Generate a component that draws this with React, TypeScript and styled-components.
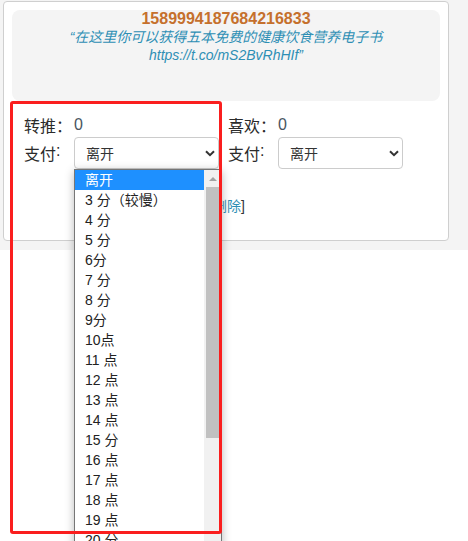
import React from "react";
import styled, { createGlobalStyle } from "styled-components";

const GlobalStyle = createGlobalStyle`
  html, body {
    margin: 0;
    padding: 0;
    overflow: hidden;
    background: #ffffff;
  }
  body {
    font-family: "Liberation Sans", "Noto Sans CJK SC", sans-serif;
    color: #333333;
  }
`;

const Stage = styled.div`
  position: relative;
  width: 468px;
  height: 541px;
  overflow: hidden;
`;

const Backdrop = styled.div`
  background: #f4f4f4;
  padding: 1px 19px 9px 3px;
`;

const Card = styled.div`
  box-sizing: border-box;
  height: 240px;
  background: #ffffff;
  border: 1px solid #cfcfcf;
  border-radius: 4px;
  padding: 8px;
`;

const TweetBox = styled.div`
  height: 91px;
  background: #f4f4f4;
  border-radius: 8px;
  text-align: center;
`;

const TweetId = styled.div`
  font-weight: bold;
  font-size: 16px;
  line-height: 18px;
  color: #c5702c;
`;

const TweetText = styled.div`
  font-style: italic;
  font-size: 14px;
  line-height: 18px;
  color: #2e8fb4;
`;

const Stats = styled.div`
  display: grid;
  grid-template-columns: 204px 204px;
  padding: 13px 0 0 12px;
`;

const Column = styled.div`
  display: flex;
  flex-direction: column;
  gap: 1px;
`;

const StatLine = styled.div`
  display: flex;
  align-items: center;
  height: 22px;
  font-size: 16px;
`;

const Label = styled.span`
  width: 50px;
  flex: none;
  font-size: 16px;
  color: #2b2b2b;
`;

const Value = styled.span`
  font-size: 16px;
  color: #4a5561;
`;

const PayLine = styled.div`
  display: flex;
  align-items: center;
  height: 32px;
`;

const RaisedColon = styled.span`
  position: relative;
  top: -4px;
`;

const SelectBox = styled.div<{ $width: number }>`
  position: relative;
  box-sizing: border-box;
  width: ${(p) => p.$width}px;
  height: 32px;
  display: flex;
  align-items: center;
  justify-content: space-between;
  padding: 0 3px 0 11px;
  border: 1px solid #cccccc;
  border-radius: 4px;
  background: #ffffff;
  font-size: 14px;
  color: #333333;
`;

const Chevron = () => (
  <svg width="10" height="7" viewBox="0 0 10 7">
    <path d="M1 1.2 L5 5.2 L9 1.2" fill="none" stroke="#333" strokeWidth="2" />
  </svg>
);

const Dropdown = styled.div`
  position: absolute;
  top: 31px;
  left: -1px;
  z-index: 2;
  box-sizing: border-box;
  width: 148px;
  height: 390px;
  display: flex;
  background: #ffffff;
  border: 1px solid #767676;
  box-shadow: 0 2px 9px rgba(0, 0, 0, 0.28);
`;

const OptionList = styled.div`
  flex: 1;
  display: flex;
  flex-direction: column;
`;

const Option = styled.div<{ $active?: boolean }>`
  height: 20px;
  line-height: 20px;
  padding-left: 10px;
  font-size: 14px;
  white-space: nowrap;
  color: ${(p) => (p.$active ? "#ffffff" : "#222222")};
  background: ${(p) => (p.$active ? "#1e90ff" : "transparent")};
`;

const Scrollbar = styled.div`
  width: 17px;
  flex: none;
  display: flex;
  flex-direction: column;
  background: #f1f1f1;
`;

const ArrowCell = styled.div`
  height: 17px;
  display: flex;
  align-items: center;
  justify-content: center;
`;

const UpArrow = styled.div`
  width: 0;
  height: 0;
  border-left: 4px solid transparent;
  border-right: 4px solid transparent;
  border-bottom: 4px solid #a3a3a3;
`;

const Thumb = styled.div`
  height: 251px;
  margin: 0 2px;
  background: #c1c1c1;
`;

const ActionRow = styled.div`
  margin-top: 27px;
  padding-left: 2px;
  text-align: center;
  font-size: 14px;
  line-height: 20px;
  color: #333333;
`;

const ActionLink = styled.a`
  color: #2e8fb4;
  text-decoration: none;
`;

const Highlight = styled.div`
  position: absolute;
  left: 10px;
  top: 101px;
  z-index: 3;
  box-sizing: border-box;
  width: 212px;
  height: 433px;
  border: 3px solid #fa1e1e;
  border-radius: 3px;
  pointer-events: none;
`;

const options = [
  "离开",
  "3 分（较慢）",
  "4 分",
  "5 分",
  "6分",
  "7 分",
  "8 分",
  "9分",
  "10点",
  "11 点",
  "12 点",
  "13 点",
  "14 点",
  "15 分",
  "16 点",
  "17 点",
  "18 点",
  "19 点",
  "20 分",
];

export default function App() {
  return (
    <Stage>
      <GlobalStyle />
      <Backdrop>
        <Card>
          <TweetBox>
            <TweetId>1589994187684216833</TweetId>
            <TweetText>
              “在这里你可以获得五本免费的健康饮食营养电子书
              <br />
              https://t.co/mS2BvRhHIf”
            </TweetText>
          </TweetBox>
          <Stats>
            <Column>
              <StatLine>
                <Label>转推：</Label>
                <Value>0</Value>
              </StatLine>
              <PayLine>
                <Label>
                  支付<RaisedColon>:</RaisedColon>
                </Label>
                <SelectBox $width={145}>
                  <span>离开</span>
                  <Chevron />
                  <Dropdown>
                    <OptionList>
                      {options.map((o, i) => (
                        <Option key={o} $active={i === 0}>
                          {o}
                        </Option>
                      ))}
                    </OptionList>
                    <Scrollbar>
                      <ArrowCell>
                        <UpArrow />
                      </ArrowCell>
                      <Thumb />
                    </Scrollbar>
                  </Dropdown>
                </SelectBox>
              </PayLine>
            </Column>
            <Column>
              <StatLine>
                <Label>喜欢：</Label>
                <Value>0</Value>
              </StatLine>
              <PayLine>
                <Label>
                  支付<RaisedColon>:</RaisedColon>
                </Label>
                <SelectBox $width={125}>
                  <span>离开</span>
                  <Chevron />
                </SelectBox>
              </PayLine>
            </Column>
          </Stats>
          <ActionRow>
            [<ActionLink href="#">删除</ActionLink>]
          </ActionRow>
        </Card>
      </Backdrop>
      <Highlight />
    </Stage>
  );
}
